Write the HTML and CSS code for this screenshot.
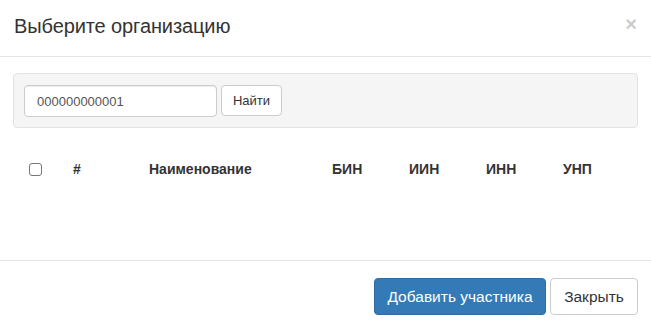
FILE: index.html
```html
<!DOCTYPE html>
<html lang="ru">
<head>
    <meta charset="UTF-8">
    <title>Выберите организацию</title>
    <link rel="stylesheet" href="styles.css">
</head>
<body>
<div class="modal">
    <div class="modal-header">
        <h4 class="modal-title">Выберите организацию</h4>
        <button class="close" type="button">&times;</button>
    </div>
    <div class="modal-body">
        <div class="well">
            <form class="search">
                <input class="form-control" type="text" value="000000000001">
                <button class="btn btn-default btn-find" type="button">Найти</button>
            </form>
        </div>
        <table class="table">
            <colgroup>
                <col class="col-check">
                <col class="col-num">
                <col class="col-name">
                <col class="col-code">
                <col class="col-code">
                <col class="col-code">
                <col>
            </colgroup>
            <thead>
            <tr>
                <th><span class="checkbox"></span></th>
                <th>#</th>
                <th>Наименование</th>
                <th>БИН</th>
                <th>ИИН</th>
                <th>ИНН</th>
                <th>УНП</th>
            </tr>
            </thead>
            <tbody></tbody>
        </table>
    </div>
    <div class="modal-footer">
        <button class="btn btn-primary btn-add" type="button">Добавить участника</button>
        <button class="btn btn-default btn-close" type="button">Закрыть</button>
    </div>
</div>
</body>
</html>
```

FILE: styles.css
```css
html {
    font-family: "Liberation Sans", Arial, sans-serif;
    color: #333;
}

body {
    margin: 0;
    background: #fff;
}

.modal {
    width: 651px;
    height: 327px;
    overflow: hidden;
}

.modal-header {
    display: flex;
    align-items: flex-start;
    justify-content: space-between;
    height: 57px;
    padding: 16px 14px 0 14px;
    border-bottom: 1px solid #e5e5e5;
    box-sizing: border-box;
}

.modal-title {
    margin: 0;
    font-size: 20px;
    font-weight: normal;
    line-height: 20px;
    letter-spacing: -0.1px;
}

.close {
    margin-top: -2px;
    padding: 0;
    border: 0;
    background: none;
    font-family: inherit;
    font-size: 20px;
    font-weight: bold;
    line-height: 1;
    color: #000;
    opacity: .2;
}

.modal-body {
    height: 204px;
    padding: 16px 13px 0 13px;
    border-bottom: 1px solid #e5e5e5;
    box-sizing: border-box;
}

.well {
    height: 55px;
    padding: 11px 10px 0;
    background: #f5f5f5;
    border: 1px solid #e3e3e3;
    border-radius: 4px;
    box-sizing: border-box;
}

.search {
    display: flex;
    gap: 4px;
    align-items: flex-start;
}

.form-control {
    width: 193px;
    height: 32px;
    padding: 0 12px;
    font-family: inherit;
    font-size: 13px;
    color: #555;
    background: #fff;
    border: 1px solid #ccc;
    border-radius: 4px;
    box-shadow: inset 0 1px 1px rgba(0, 0, 0, .075);
    box-sizing: border-box;
}

.btn {
    font-family: inherit;
    border-radius: 4px;
    border: 1px solid transparent;
    box-sizing: border-box;
    cursor: pointer;
}

.btn-default {
    color: #333;
    background: #fff;
    border-color: #ccc;
}

.btn-find {
    width: 61px;
    height: 31px;
    padding: 0;
    font-size: 13px;
}

.table {
    width: 100%;
    margin-top: 23px;
    border-collapse: collapse;
    table-layout: fixed;
}

.col-check {
    width: 60px;
}

.col-num {
    width: 76px;
}

.col-name {
    width: 183px;
}

.col-code {
    width: 77px;
}

.table th {
    padding: 8px 0;
    text-align: left;
    font-size: 14px;
    font-weight: bold;
    line-height: 20px;
    height: 20px;
}

.table th:first-child {
    padding-left: 16px;
}

.checkbox {
    display: inline-block;
    width: 13px;
    height: 13px;
    border: 1px solid #767676;
    border-radius: 3px;
    vertical-align: -2px;
    box-sizing: border-box;
}

.modal-footer {
    display: flex;
    justify-content: flex-end;
    gap: 4px;
    padding: 17px 13px 0 0;
}

.btn-primary {
    color: #fff;
    background: #337ab7;
    border-color: #2e6da4;
}

.modal-footer .btn {
    height: 37px;
    padding: 0;
    font-size: 15.5px;
}

.btn-add {
    width: 172px;
}

.btn-close {
    width: 88px;
}
```
